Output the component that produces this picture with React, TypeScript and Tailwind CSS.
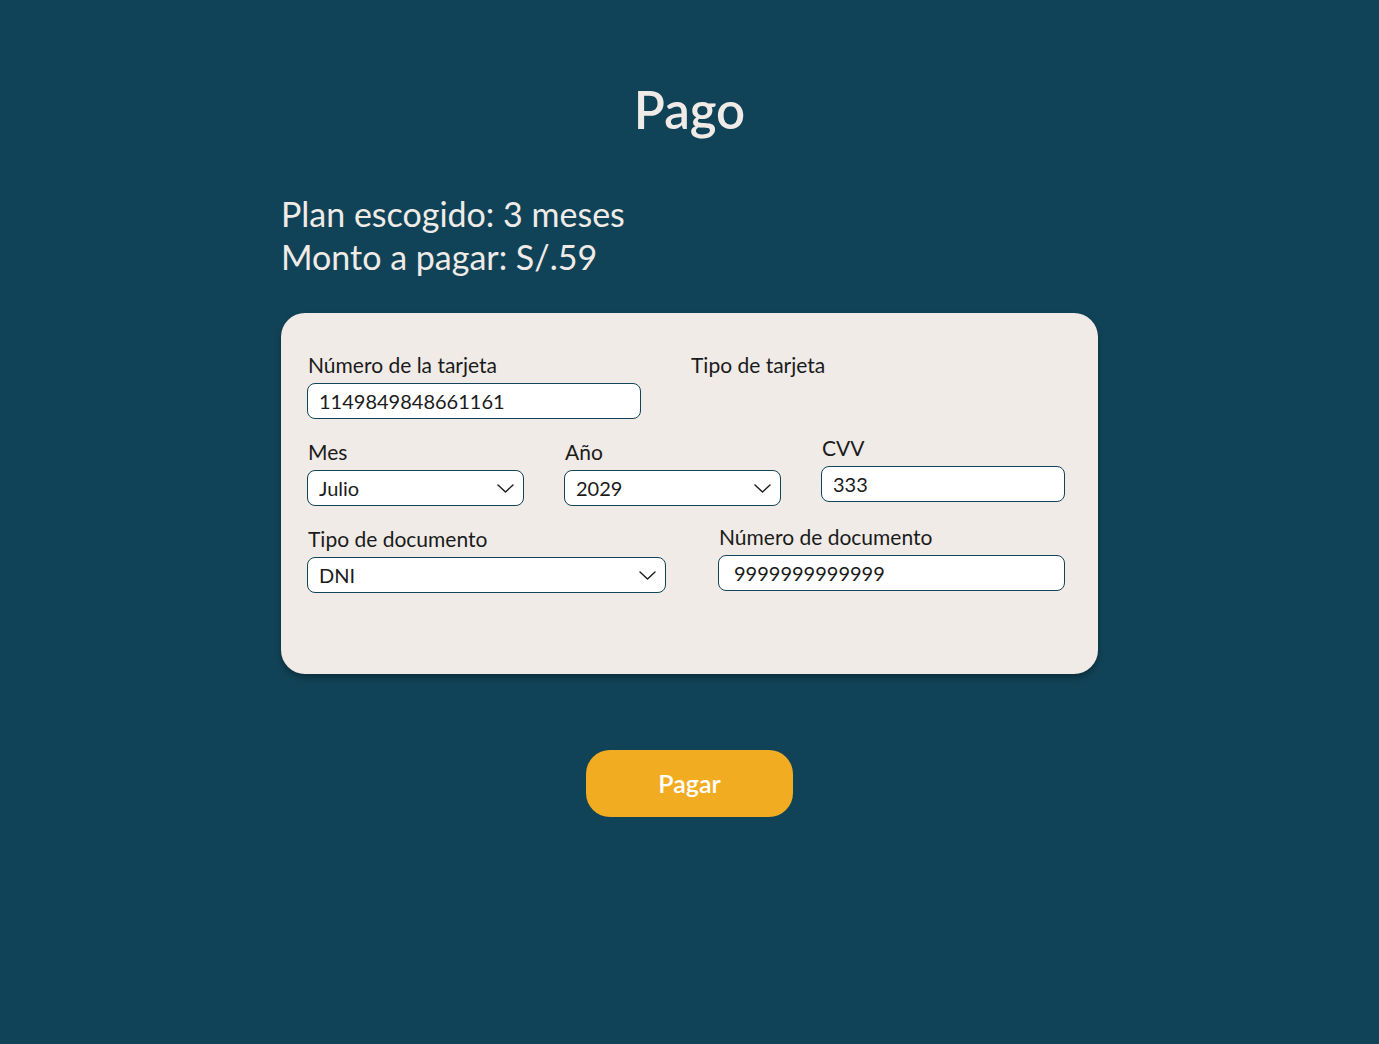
const font = { fontFamily: "Lato, 'Open Sans', sans-serif" };

function Chevron() {
  return (
    <svg width="17" height="9" viewBox="0 0 17 9" fill="none" className="text-[#1b1b1b]">
      <path d="M1 1l7.5 7 7.5-7" stroke="currentColor" strokeWidth="1.4" strokeLinecap="round" strokeLinejoin="round" />
    </svg>
  );
}

function Field({ label, value, width, select, pad = "pl-[11px]" }: { label: string; value: string; width: string; select?: boolean; pad?: string }) {
  return (
    <div className={`flex flex-col ${width}`}>
      <label className="text-[21px] leading-[24px] text-[#1b1b1b] pl-[1px]">{label}</label>
      <div className={`mt-[6px] h-[36px] rounded-[8px] border border-[#114459] bg-white flex items-center justify-between ${pad} pr-[9px] text-[20px] text-[#1b1b1b]`}>
        <span>{value}</span>
        {select && <Chevron />}
      </div>
    </div>
  );
}

export default function App() {
  return (
    <div style={font} className="min-h-[1044px] bg-[#114358] flex flex-col items-center">
      <h1 className="mt-[80px] text-[51px] leading-[60px] font-semibold text-[#f0ebe7]">Pago</h1>

      <div className="w-[817px] mt-[52px] text-[34px] leading-[43px] text-[#f0ebe7]">
        <p>Plan escogido: 3 meses</p>
        <p>Monto a pagar: S/.59</p>
      </div>

      <div className="w-[817px] h-[361px] mt-[35px] rounded-[24px] bg-[#f0ebe7] shadow-[0_4px_6px_rgba(0,0,0,0.3)] px-[26px] pt-[40px]">
        <div className="flex gap-[50px]">
          <Field label="Número de la tarjeta" value="1149849848661161" width="w-[334px]" />
          <span className="text-[21px] leading-[24px] text-[#1b1b1b]">Tipo de tarjeta</span>
        </div>

        <div className="flex gap-[40px] mt-[21px]">
          <Field label="Mes" value="Julio" width="w-[217px]" select />
          <Field label="Año" value="2029" width="w-[217px]" select />
          <div className="-mt-[4px]">
            <Field label="CVV" value="333" width="w-[244px]" />
          </div>
        </div>

        <div className="flex gap-[52px] mt-[21px]">
          <Field label="Tipo de documento" value="DNI" width="w-[359px]" select />
          <div className="-mt-[2px]">
            <Field label="Número de documento" value="9999999999999" width="w-[347px]" pad="pl-[15px]" />
          </div>
        </div>
      </div>

      <button className="mt-[76px] w-[207px] h-[67px] rounded-[24px] bg-[#f2ac22] text-white text-[25px] font-semibold">
        Pagar
      </button>
    </div>
  );
}
